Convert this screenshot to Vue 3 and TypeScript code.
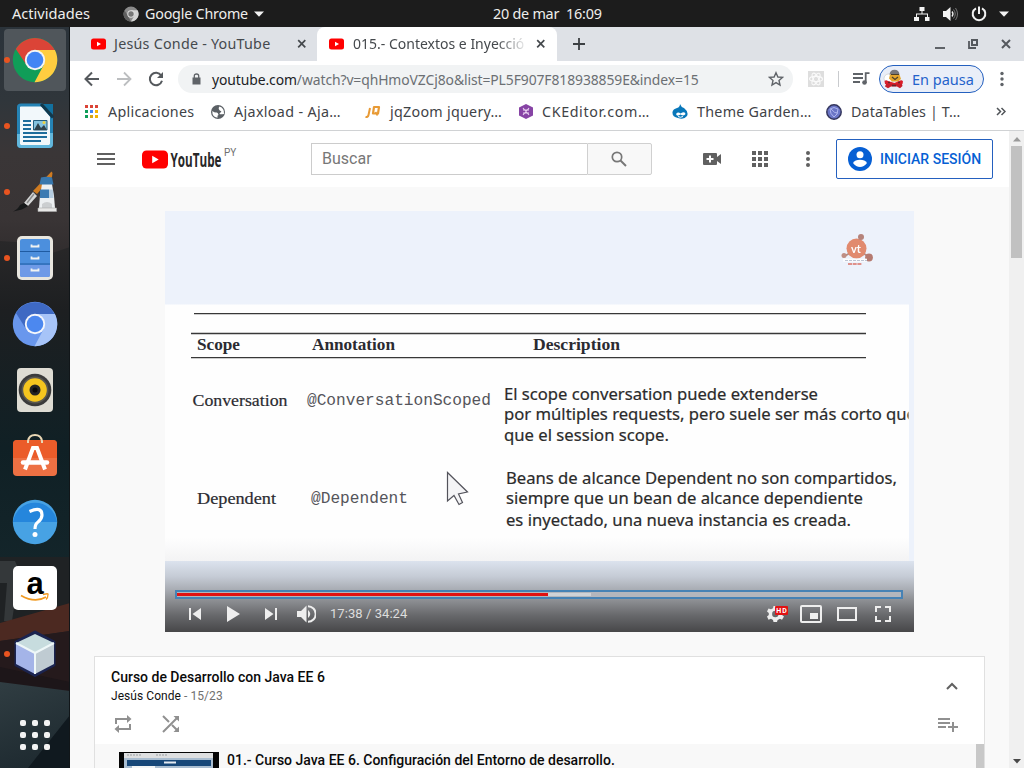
<script setup lang="ts">
interface Bookmark {
  kind: string
  label: string
  width: number
}

const bookmarks: Bookmark[] = [
  { kind: 'grid', label: 'Aplicaciones', width: 126 },
  { kind: 'globe', label: 'Ajaxload - Aja…', width: 154 },
  { kind: 'jq', label: 'jqZoom jquery…', width: 154 },
  { kind: 'ck', label: 'CKEditor.com…', width: 153 },
  { kind: 'drupal', label: 'Theme Garden…', width: 154 },
  { kind: 'dt', label: 'DataTables | T…', width: 150 },
]

const dock = [
  { id: 'chrome', running: true, active: true },
  { id: 'writer', running: true, active: false },
  { id: 'paint', running: true, active: false },
  { id: 'files', running: true, active: false },
  { id: 'chromium', running: false, active: false },
  { id: 'rhythm', running: false, active: false },
  { id: 'store', running: false, active: false },
  { id: 'help', running: false, active: false },
  { id: 'amazon', running: false, active: false },
  { id: 'netbeans', running: true, active: false },
]

const progress = { played: 51.3, buffered: 57.2 }
const nine = [0, 1, 2, 3, 4, 5, 6, 7, 8]
const appColors = ['#db4437', '#db4437', '#db4437', '#0f9d58', '#4285f4', '#f4b400', '#0f9d58', '#d9a514', '#f4b400']
</script>

<template>
  <div class="desktop">
    <header class="topbar">
      <span class="activities">Actividades</span>
      <svg class="tray-chrome" width="16" height="16" viewBox="0 0 16 16"><circle cx="8" cy="8" r="7.5" fill="#8b8b8b" /><path d="M8 4.3H14.6A7.5 7.5 0 0 1 8 15.5L11.3 9.8Z" fill="#d4d4d4" /><path d="M4.8 9.8 1.5 4.2A7.5 7.5 0 0 0 8 15.5Z" fill="#5f5f5f" /><circle cx="8" cy="8" r="3.7" fill="#ddd" /><circle cx="8" cy="8" r="2.7" fill="#777" /></svg>
      <span class="appname">Google Chrome</span>
      <svg class="tri" width="10" height="6"><path d="M0 0.5H10L5 5.8Z" fill="#f2f2f2" /></svg>
      <span class="clock">20 de mar&nbsp; 16:09</span>
      <div class="tray">
        <svg width="16" height="14" viewBox="0 0 16 14"><path d="M5.5 0h5v4h-2v2.5H14V10h1.500v4H11v-4h2V7.500H3V10h2v4H0v-4h2V6.500h5.500V4h-2z" fill="#f2f2f2" /></svg>
        <svg width="16" height="14" viewBox="0 0 16 14"><path d="M0 4h3L7.500 0v14L3 10H0z" fill="#f2f2f2" /><path d="M9 4.500q2 2.500 0 5" fill="none" stroke="#f2f2f2" stroke-width="1.300" /><path d="M10.500 2.500q3.500 4.500 0 9M12.500 1q4 6 0 12" fill="none" stroke="#777" stroke-width="1" /></svg>
        <svg width="16" height="16" viewBox="0 0 16 16"><path d="M5 2.300A6.300 6.300 0 1 0 11 2.300" fill="none" stroke="#f2f2f2" stroke-width="2" /><path d="M8 0.500V8" stroke="#f2f2f2" stroke-width="2" /></svg>
        <svg width="10" height="6"><path d="M0 0.500H10L5 5.800Z" fill="#f2f2f2" /></svg>
      </div>
    </header>

    <div class="workspace">
      <aside class="dock">
        <svg class="wall" width="70" height="741" viewBox="0 0 70 741">
          <defs>
            <linearGradient id="sky" x2="0" y2="1"><stop offset="0" stop-color="#2b333a" /><stop offset=".1" stop-color="#30363b" /><stop offset=".17" stop-color="#3a3637" /><stop offset=".26" stop-color="#393435" /><stop offset=".32" stop-color="#2f2b2c" /></linearGradient>
            <linearGradient id="hill" x2="0" y2="1"><stop offset="0" stop-color="#292829" /><stop offset=".2" stop-color="#1d1f21" /><stop offset=".6" stop-color="#102025" /><stop offset="1" stop-color="#14262b" /></linearGradient>
            <linearGradient id="floor" x2="0.300" y2="1"><stop offset="0" stop-color="#303d42" /><stop offset="1" stop-color="#1f2b31" /></linearGradient>
          </defs>
          <path d="M0 0H70V741H0Z" fill="url(#sky)" />
          <path d="M0 214 30 216 52 226 70 220V560H0Z" fill="url(#hill)" />
          <path d="M0 530H70V680H0Z" fill="#1f2224" />
          <path d="M0 534H15L18 541H54V546H20L17 560 12 594H4L7 556H0Z" fill="#34383a" />
          <path d="M0 596 70 576V604L0 614Z" fill="#4c2921" />
          <path d="M0 614 70 604V665L0 658Z" fill="#251a1c" />
          <path d="M0 640 70 655V664L0 657Z" fill="#1d1619" />
          <path d="M0 655 70 664V741H0Z" fill="url(#floor)" />
          <path d="M70 688 28 741H70Z" fill="#10191f" />
          <path d="M69.500 0V741" stroke="#111619" />
        </svg>
        <div v-for="d in dock" :key="d.id" class="dock-item" :class="{ active: d.active }">
          <i v-if="d.running" class="run-dot"></i>
          <svg v-if="d.id === 'chrome'" width="46" height="46" viewBox="0 0 46 46"><circle cx="23" cy="23" r="22.200" fill="#109d58" /><path d="M3.800 12A22.200 22.200 0 0 1 42.200 12L42.500 13H23L14.500 28Z" fill="#db4437" /><path d="M23 13H42.900A22.200 22.200 0 0 1 22.500 45.200L31.700 28Z" fill="#ffcd40" /><circle cx="23" cy="23" r="10.200" fill="#f4f4f4" /><circle cx="23" cy="23" r="8.300" fill="#4285f4" /></svg>
          <svg v-else-if="d.id === 'writer'" width="38" height="46" viewBox="0 0 38 46"><path d="M5 2H26L35.500 13V41Q35.500 43.500 33 43.500H5Q2.500 43.500 2.500 41V4Q2.500 2 5 2Z" fill="#f2f8fb" stroke="#2583b5" stroke-width="3" /><path d="M2.500 31V41Q2.500 43.500 5 43.500H33Q35.500 43.500 35.500 41V30" fill="none" stroke="#62b7dc" stroke-width="3" /><path d="M27 1H37V12Z" fill="#12719f" /><path d="M25 1 37 14.500" stroke="#12384b" stroke-width="3" /><path d="M7 18h8M7 22h8M7 26h8M7 30h24M7 34h24M7 38h18" stroke="#1d6d9c" stroke-width="1.800" /><path d="M17.500 17.500H31V27H17.500Z" fill="#85c3df" stroke="#255f7f" /><path d="M18 27 22 20 25 25 28 22 31 27Z" fill="#30434d" /><circle cx="28" cy="19.500" r="1.500" fill="#eed340" /></svg>
          <svg v-else-if="d.id === 'paint'" width="46" height="44" viewBox="0 0 46 44"><path d="M39.500 1.500 40.500 3 40 7 25 24 21 21Z" fill="#d07b20" /><path d="M21 22 25 26 16 36 12 33Z" fill="#d6d7d7" /><path d="M22 24 15 33" stroke="#8b8b8b" stroke-width="1.500" /><path d="M12 33 16 36Q11 40 1 41.500 6 39 8 35Z" fill="#17191a" /><path d="M30 14H40Q42.500 26 43 38H27Q27.500 25 30 14Z" fill="#eceff1" /><path d="M29 7.500Q34.500 6 40 7.500L41.500 14.500H27.500Z" fill="#3877ad" /><path d="M28 19.500H37V28H28Z" fill="#3d7bb2" /><path d="M37 19.500H41L41.500 28H37Z" fill="#b6cde0" /><path d="M30 38V34Q35 30 40 34V38Z" fill="#cbced0" /><path d="M26 38H44.500V41.500H26Z" fill="#e8e8e7" stroke="#aaa" stroke-width=".6" /></svg>
          <svg v-else-if="d.id === 'files'" width="38" height="46" viewBox="0 0 38 46"><rect x="1" y="1" width="36" height="44" rx="5" fill="#e8e6df" /><rect x="4" y="4" width="30" height="38" rx="2" fill="#4c8fdd" /><path d="M4 30H34V40Q34 42 32 42H6Q4 42 4 40Z" fill="#6f9ae7" /><path d="M4 16.500H34M4 29H34" stroke="#1f5ba2" /><path d="M15.500 9.500V11.500H22.500V9.500M15.500 21.500V23.500H22.500V21.500M15.500 33.500V35.500H22.500V33.500" fill="none" stroke="#f1f3f2" stroke-width="1.800" /></svg>
          <svg v-else-if="d.id === 'chromium'" width="46" height="46" viewBox="0 0 46 46"><circle cx="23" cy="23" r="22.200" fill="#6997ed" /><path d="M4 12A22.200 22.200 0 0 1 42.500 13H23L14 28Z" fill="#3e69c3" /><path d="M23 13H42.900A22.200 22.200 0 0 1 22.500 45.200L31.700 28Z" fill="#a7c4f8" /><circle cx="23" cy="23" r="10.200" fill="#f4f6fb" /><circle cx="23" cy="23" r="8.300" fill="#4c88ef" /></svg>
          <svg v-else-if="d.id === 'rhythm'" width="38" height="46" viewBox="0 0 38 46"><rect x="1" y="1" width="36" height="44" rx="4" fill="#dedcd3" /><circle cx="19" cy="23" r="16.300" fill="#3b3b3b" /><circle cx="19" cy="23" r="13.500" fill="#5a5850" /><circle cx="19" cy="23" r="11.800" fill="#f5c51e" /><circle cx="19" cy="23" r="5.500" fill="#242424" /><circle cx="19" cy="23" r="2.500" fill="#090909" /></svg>
          <svg v-else-if="d.id === 'store'" class="store" width="46" height="46" viewBox="0 0 46 46"><rect x="1" y="9" width="44" height="36" rx="4" fill="#ed7043" /><path d="M1 27V13Q1 9 5 9H41Q45 9 45 13V27Z" fill="#e95420" opacity=".7" /><path d="M16 12V10Q17 4 23 4 29 4 30 10V12" fill="none" stroke="#e9d7b5" stroke-width="2" /><path d="M13 38.500 21 17H25L33 38.500" fill="none" stroke="#fff" stroke-width="4" /><path d="M11 31.500H35" stroke="#fff" stroke-width="4.500" stroke-linecap="round" /></svg>
          <svg v-else-if="d.id === 'help'" width="46" height="46" viewBox="0 0 46 46"><circle cx="23" cy="23" r="22.200" fill="#47a2e4" /><path d="M1 23A22.200 22.200 0 0 1 45 23Z" fill="#2586dc" /><path d="M17.500 12.500Q30 7 30 16 30 20 26 23 23 25 23 30" fill="none" stroke="#fff" stroke-width="3.200" /><circle cx="23" cy="35.500" r="2.500" fill="#fff" /></svg>
          <svg v-else-if="d.id === 'amazon'" width="46" height="46" viewBox="0 0 46 46"><rect x="1" y="1" width="44" height="44" rx="5" fill="#fff" /><text x="23" y="28.500" text-anchor="middle" class="amazon-a">a</text><path d="M9 30.500Q23 38.500 34 32" fill="none" stroke="#f19a21" stroke-width="1.800" /><path d="M31 29.500Q37 28 36 29.500 36 33 34 34.500" fill="none" stroke="#f19a21" stroke-width="1.300" /></svg>
          <svg v-else width="46" height="48" viewBox="0 0 46 48"><path d="M23 2 42 12V35L23 45.500 4 35V12Z" fill="#1d2549" stroke="#1b2450" stroke-width="3" stroke-linejoin="round" /><path d="M23 4 42 13 23 23 4 13Z" fill="#c7dcde" /><path d="M4 13 23 23V44L4 34Z" fill="#a4b4e8" /><path d="M42 13 23 23V44L42 34Z" fill="#bfcbd2" /><path d="M4 13 23 23 42 13M23 23V44" fill="none" stroke="#eef7f8" stroke-width="2" /></svg>
        </div>
        <div class="show-apps"><i v-for="n in nine" :key="n"></i></div>
      </aside>

      <section class="browser">
        <div class="tabs">
          <div class="tab idle">
            <svg width="15" height="12" viewBox="0 0 15 12"><rect y=".5" width="15" height="11" rx="2.500" fill="#f00" /><path d="M6 3.700V8.300L10 6Z" fill="#fff" /></svg>
            <span class="tab-title first">Jesús Conde - YouTube</span>
            <svg class="close" width="10" height="10"><path d="M1.200 1.200 8.300 8.300M8.300 1.200 1.200 8.300" stroke="#45494d" stroke-width="1.700" /></svg>
          </div>
          <div class="tab current">
            <svg width="15" height="12" viewBox="0 0 15 12"><rect y=".5" width="15" height="11" rx="2.500" fill="#f00" /><path d="M6 3.700V8.300L10 6Z" fill="#fff" /></svg>
            <span class="tab-title second">015.- Contextos e Inyecció</span>
            <svg class="close" width="10" height="10"><path d="M1.200 1.200 8.300 8.300M8.300 1.200 1.200 8.300" stroke="#45494d" stroke-width="1.700" /></svg>
          </div>
          <svg class="newtab" width="12" height="12"><path d="M6 0V12M0 6H12" stroke="#3c4043" stroke-width="1.800" /></svg>
          <div class="winbtns">
            <svg width="10" height="12"><path d="M0 10H10" stroke="#5f6368" stroke-width="2" /></svg>
            <svg width="10" height="12"><path d="M4 2H9V7H4Z" fill="none" stroke="#55595e" stroke-width="2" /><path d="M1 3V10H8" fill="none" stroke="#55595e" stroke-width="1.800" /></svg>
            <svg width="10" height="12"><path d="M1 2 9 10M9 2 1 10" stroke="#55595e" stroke-width="2" /></svg>
          </div>
        </div>

        <div class="toolbar">
          <svg width="16" height="16" viewBox="0 0 16 16"><path d="M15 8H2M8 1.500 1.500 8 8 14.500" fill="none" stroke="#55595d" stroke-width="2" /></svg>
          <svg width="16" height="16" viewBox="0 0 16 16"><path d="M1 8H14M8 1.500 14.500 8 8 14.500" fill="none" stroke="#bcbec0" stroke-width="1.800" /></svg>
          <svg width="16" height="16" viewBox="0 0 16 16"><path d="M13.200 4.500A6.200 6.200 0 1 0 14 9.800" fill="none" stroke="#55595d" stroke-width="2" /><path d="M15 1V7H9Z" fill="#55595d" /></svg>
          <div class="omnibox">
            <svg class="lock" width="9" height="12"><path d="M.5 4.500H8.500V11.500H.5Z" fill="#5f6368" /><path d="M2.300 5V3Q2.300 1 4.500 1T6.700 3V5" fill="none" stroke="#5f6368" stroke-width="1.300" /></svg>
            <span class="url"><b>youtube.com</b>/watch?v=qhHmoVZCj8o&amp;list=PL5F907F818938859E&amp;index=15</span>
            <svg class="star" width="16" height="16" viewBox="0 0 16 16"><path d="M8 1.700 9.900 6 14.500 6.400 11 9.500 12 14 8 11.600 4 14 5 9.500 1.500 6.400 6.100 6Z" fill="none" stroke="#5f6368" stroke-width="1.400" /></svg>
          </div>
          <svg class="ext" width="16" height="16"><rect width="16" height="16" fill="#dedede" /><g fill="none" stroke="#fafafa" stroke-width="1.100"><ellipse cx="8" cy="8" rx="6.500" ry="2.600" /><ellipse cx="8" cy="8" rx="6.500" ry="2.600" transform="rotate(60 8 8)" /><ellipse cx="8" cy="8" rx="6.500" ry="2.600" transform="rotate(120 8 8)" /></g></svg>
          <i class="divider"></i>
          <svg class="queue" width="17" height="14"><path d="M0 2H10M0 6H10M0 10H7M12.700 11V1.200H16.500" fill="none" stroke="#5f6368" stroke-width="1.800" /><circle cx="11.500" cy="10.500" r="2.300" fill="#5f6368" /></svg>
          <div class="profile">
            <svg width="22" height="20" viewBox="0 0 22 20"><circle cx="5.500" cy="9.500" r="4.500" fill="#fff" stroke="#c5c5c5" stroke-width=".6" /><path d="M6.500 5.500Q7 .8 11.500 .8T16.500 5.500Z" fill="#77777a" /><path d="M7 5.500H16.500L18 10 15 12.500H9L6 9.500Z" fill="#e4a62c" /><path d="M8 5.500H16M9 8 12 10.500 15 8" stroke="#4c4029" stroke-width="1.200" fill="none" /><path d="M1.500 12Q3 10.500 5 12L11.500 14 16 12Q19 10.500 20 12.500L19.500 15H2Z" fill="#d91d2a" /><path d="M3 15H19L19.500 17 17 19.300 14 17.500H8L5 19.300 2 17.500Z" fill="#c81c28" /><path d="M5 13.500H7M15 13.500H17M9 16.500H13" stroke="#63262b" fill="none" stroke-width="1.300" /></svg>
            <span>En pausa</span>
          </div>
          <svg class="kebab" width="4" height="16"><circle cx="2" cy="2.500" r="1.700" /><circle cx="2" cy="8" r="1.700" /><circle cx="2" cy="13.500" r="1.700" /></svg>
        </div>

        <nav class="bookmarks">
          <div v-for="b in bookmarks" :key="b.kind" class="bookmark" :class="'bm-' + b.kind" :style="{ width: b.width + 'px' }">
            <svg v-if="b.kind === 'grid'" width="14" height="14"><rect v-for="n in nine" :key="n" :x="(n % 3) * 5" :y="Math.floor(n / 3) * 5" width="3" height="3" :fill="appColors[n]" /></svg>
            <svg v-else-if="b.kind === 'globe'" width="14" height="14" viewBox="0 0 14 14"><circle cx="7" cy="7" r="7" fill="#5b6065" /><path d="M1.300 6Q4 8 5.500 7.500T7.500 10Q6 10 6.500 12.700Q1 12 1.300 6ZM8.500 1.500Q7 3 8 4.500T10 6 9 8 13 9Q13.500 3 8.500 1.500Z" fill="#fff" /></svg>
            <svg v-else-if="b.kind === 'jq'" width="16" height="14" viewBox="0 0 16 14"><path d="M5 3 3.500 10Q3 12.500 .5 12" fill="none" stroke="#e89a35" stroke-width="2" /><path d="M9 2H14L13 8.500H8Z" fill="none" stroke="#e89a35" stroke-width="2.200" stroke-linejoin="round" /><path d="M10.500 7 12.500 10.500" stroke="#e89a35" stroke-width="1.600" /></svg>
            <svg v-else-if="b.kind === 'ck'" width="14" height="15" viewBox="0 0 14 15"><path d="M7 0 14 3.500V11.500L7 15 0 11.500V3.500Z" fill="#8744a5" /><path d="M4 4 10 11M10 4 4 11M4 6H10M4 9H10" stroke="#e9d1f0" stroke-width="1.100" /></svg>
            <svg v-else-if="b.kind === 'drupal'" width="16" height="15" viewBox="0 0 16 15"><path d="M8 0Q9 3 12 4 17 8 15 12 12 16 6 14 0 13 .5 8 1 5 5 4 8 3 8 0Z" fill="#0877ba" /><path d="M4 10Q6 7.500 8.500 9.500 13 7 13.500 10 12 12.500 8.500 10.500 5 13 4 10Z" fill="#fff" /><path d="M6 12.500Q8.500 14 11 12.500" stroke="#fff" fill="none" /></svg>
            <svg v-else width="16" height="16" viewBox="0 0 16 16"><circle cx="8" cy="8" r="7.200" fill="#6a75c6" stroke="#34365d" stroke-width="1.500" /><path d="M4 5Q8 2 12 5 12 11 8 13 4 10 4 5M5 5Q9 10 12 9" fill="none" stroke="#aeb5ee" /></svg>
            <span>{{ b.label }}</span>
          </div>
          <svg class="more" width="10" height="9"><path d="M1 1 4.500 4.500 1 8M5.500 1 9 4.500 5.500 8" fill="none" stroke="#505458" stroke-width="1.500" /></svg>
        </nav>

        <div class="page">
          <div class="content">
            <header class="yt-head">
              <svg class="burger" width="18" height="12"><path d="M0 1H18M0 6H18M0 11H18" stroke="#606060" stroke-width="2" /></svg>
              <svg class="logo" width="80" height="32"><rect x="0" y="7.500" width="26" height="18" rx="4.500" fill="#f00" /><path d="M10.200 12.800V20.200L16.700 16.500Z" fill="#fff" /><text x="28.500" y="23.500" textLength="51" lengthAdjust="spacingAndGlyphs" class="wordmark">YouTube</text></svg>
              <span class="country">PY</span>
              <div class="search"><span class="field">Buscar</span><span class="go"><svg width="16" height="16" viewBox="0 0 16 16"><circle cx="6" cy="6" r="4.700" fill="none" stroke="#777" stroke-width="1.700" /><path d="M9.500 9.500 15 15" stroke="#777" stroke-width="2" /></svg></span></div>
              <svg class="camera" width="18" height="12"><path d="M1 0H13Q14 0 14 1V4L18 1V11L14 8V11Q14 12 13 12H1Q0 12 0 11V1Q0 0 1 0Z" fill="#606060" /><path d="M7 2.500V9.500M3.500 6H10.500" stroke="#fff" stroke-width="2" /></svg>
              <svg class="apps" width="16" height="16"><rect v-for="n in nine" :key="n" :x="(n % 3) * 6" :y="Math.floor(n / 3) * 6" width="4" height="4" fill="#606060" /></svg>
              <svg class="dots" width="4" height="16"><circle cx="2" cy="2" r="2" /><circle cx="2" cy="8" r="2" /><circle cx="2" cy="14" r="2" /></svg>
              <div class="signin"><svg width="24" height="24"><circle cx="12" cy="12" r="12" fill="#065fd4" /><circle cx="12" cy="7.700" r="3.500" fill="#fff" /><path d="M5 16Q7 12.800 12 12.800T19 16Q16 20 12 20T5 16Z" fill="#fff" /></svg><span>INICIAR SESIÓN</span></div>
            </header>

            <div class="player">
              <svg class="slide" width="749" height="421" viewBox="0 0 749 421">
                <defs>
                  <linearGradient id="shade" x2="0" y2="1"><stop offset="0" stop-color="#dce3ee" /><stop offset=".22" stop-color="#c5cbd5" /><stop offset=".4" stop-color="#a9adb4" /><stop offset=".56" stop-color="#8c8e92" /><stop offset=".76" stop-color="#68696c" /><stop offset="1" stop-color="#474749" /></linearGradient>
                  <linearGradient id="paper" x2="0" y2="1"><stop offset=".91" stop-color="#fefefe" /><stop offset="1" stop-color="#f3f3f4" /></linearGradient>
                  <clipPath id="edge"><path d="M0 90H743.500V350H0Z" /></clipPath>
                </defs>
                <path d="M0 0H749V421H0Z" fill="#edf2fb" />
                <path d="M0 93.500H744V350H0Z" fill="url(#paper)" />
                <path d="M0 350H749V421H0Z" fill="url(#shade)" />
                <g opacity=".85"><path d="M678 46 685 42M692 38 695 28M692 38 704 46" stroke="#a9776b" stroke-width="1.800" /><circle cx="691.500" cy="37.500" r="10" fill="#df7856" /><circle cx="696" cy="26" r="3" fill="#ac7064" /><circle cx="704" cy="46.500" r="3.900" fill="#ac6658" /><circle cx="679" cy="44.500" r="2.500" fill="#b87e70" /><text x="686" y="41.500" class="vt">vt</text><path d="M678 49.200H702" stroke="#fff" stroke-width="3" /><path d="M680 49.500H702" stroke="#b5bccb" stroke-width="1" stroke-dasharray="3 1" /><path d="M683 53H697" stroke="#d85c4d" stroke-width="1.600" stroke-dasharray="4 .7" /></g>
                <path d="M29 102.700H701M26 122.500H701M26 146.700H701" stroke="#383838" stroke-width="1.300" />
                <g class="head"><text x="32" y="139" textLength="43" lengthAdjust="spacingAndGlyphs">Scope</text><text x="147" y="139" textLength="83" lengthAdjust="spacingAndGlyphs">Annotation</text><text x="368" y="139" textLength="87" lengthAdjust="spacingAndGlyphs">Description</text></g>
                <g class="scope"><text x="27.500" y="195" textLength="95" lengthAdjust="spacingAndGlyphs">Conversation</text><text x="32" y="292.500" textLength="79" lengthAdjust="spacingAndGlyphs">Dependent</text></g>
                <g class="code"><text x="142" y="194" textLength="184" lengthAdjust="spacingAndGlyphs">@ConversationScoped</text><text x="146" y="292" textLength="97" lengthAdjust="spacingAndGlyphs">@Dependent</text></g>
                <g class="desc" clip-path="url(#edge)">
                  <text x="339" y="188.500" textLength="314" lengthAdjust="spacingAndGlyphs">El scope conversation puede extenderse</text>
                  <text x="339" y="209" textLength="412" lengthAdjust="spacingAndGlyphs">por múltiples requests, pero suele ser más corto que</text>
                  <text x="339" y="230" textLength="165" lengthAdjust="spacingAndGlyphs">que el session scope.</text>
                  <text x="341" y="273" textLength="391" lengthAdjust="spacingAndGlyphs">Beans de alcance Dependent no son compartidos,</text>
                  <text x="341" y="293" textLength="357" lengthAdjust="spacingAndGlyphs">siempre que un bean de alcance dependiente</text>
                  <text x="341" y="315" textLength="345" lengthAdjust="spacingAndGlyphs">es inyectado, una nueva instancia es creada.</text>
                </g>
                <path d="M282.500 261.500V290L289 284.500 294 293.500 297.500 291.500 293.500 283 302.500 281Z" fill="#f4f4f6" stroke="#53535b" stroke-width="1.200" />
              </svg>
              <div class="seek"><i class="buffered" :style="{ width: progress.buffered + '%' }"></i><i class="played" :style="{ width: progress.played + '%' }"></i></div>
              <div class="controls">
                <svg width="12" height="12"><path d="M0 0H2V12H0ZM12 0V12L3.500 6Z" /></svg>
                <svg class="play" width="14" height="16"><path d="M0 0V16L13 8Z" /></svg>
                <svg class="next" width="12" height="12"><path d="M10 0H12V12H10ZM0 0V12L8.500 6Z" /></svg>
                <svg class="volume" width="19" height="18"><path d="M0 6H4L9.500 0.500V17.500L4 12H0Z" /><path d="M11 5Q15.500 9 11 13Z" /><path d="M11 1.300A7.700 7.700 0 0 1 11 16.700" fill="none" stroke="#eee" stroke-width="2" /></svg>
                <span class="time">17:38 / 34:24</span>
                <svg class="gear" width="22" height="18" viewBox="0 0 22 18"><path d="M6.500 1H10L10.600 3.300 13 4.300 15 3.400 17 6.500 15 8.300V10L17 11.500 15 14.700 13 13.800 10.600 15 10 17H6.500L6 15 4 13.800 1.500 14.700 0 11.500 1.800 10V8L0 6.500 1.500 3.400 4 4.300 6 3.300ZM8.300 5.800A3.200 3.200 0 1 0 8.300 12.200 3.200 3.200 0 1 0 8.300 5.800Z" fill-rule="evenodd" /><rect x="8" y="1" width="13" height="9" rx="1" fill="#e21212" /><text x="9.300" y="8" textLength="10.500" class="hd">HD</text></svg>
                <svg class="mini" width="22" height="18"><rect x="1" y="1" width="20" height="16" rx="1" fill="none" stroke="#eee" stroke-width="2" /><path d="M10 8H18V14H10Z" /></svg>
                <svg class="theater" width="20" height="14"><path d="M1 1H19V13H1Z" fill="none" stroke="#eee" stroke-width="2" /></svg>
                <svg class="full" width="16" height="16"><path d="M1 6V1H6M10 1H15V6M15 10V15H10M6 15H1V10" fill="none" stroke="#eee" stroke-width="2" /></svg>
              </div>
            </div>

            <div class="playlist">
              <div class="pl-head">
                <div class="pl-titles">
                  <div class="pl-title">Curso de Desarrollo con Java EE 6</div>
                  <div class="pl-sub"><span>Jesús Conde</span> - 15/23</div>
                </div>
                <svg class="chevron" width="12" height="8"><path d="M1 7 6 2 11 7" fill="none" stroke="#606060" stroke-width="2" /></svg>
              </div>
              <div class="pl-actions">
                <svg width="18" height="20"><path d="M2 10V5H14M16 10V15H4" fill="none" stroke="#909090" stroke-width="2" /><path d="M13 1 17.500 5 13 9ZM5 11 .5 15 5 19Z" fill="#909090" /></svg>
                <svg width="18" height="18"><path d="M1 1 7 7M1 17 15 3M10 10 15 15" fill="none" stroke="#909090" stroke-width="2" /><path d="M11.500 1H17V6.500ZM17 11.500V17H11.500Z" fill="#909090" /></svg>
                <svg class="add" width="20" height="15"><path d="M0 2H12M0 6H12M0 10H8M15 5V15M10 10H20" stroke="#909090" stroke-width="2" /></svg>
              </div>
              <div class="pl-list">
                <svg class="thumb" width="100" height="16"><path d="M0 0H100V16H0Z" fill="#050505" /><path d="M5 1H94V16H5Z" fill="#a9bdd0" /><path d="M5 1H94V6H5Z" fill="#dedfe0" /><path d="M8 3H22M37 3H49" stroke="#999da0" stroke-dasharray="2 1" /><path d="M8 8H92V14H8Z" fill="#174778" /><path d="M45 10.500H57" stroke="#e4eaf1" stroke-width="2" /><path d="M13 14H36V16H13Z" fill="#f3f5f5" /></svg>
                <span class="video-title">01.- Curso Java EE 6. Configuración del Entorno de desarrollo.</span>
                <i class="pl-scroll"></i>
              </div>
            </div>
          </div>
          <div class="scrollbar">
            <svg width="8" height="5"><path d="M4 0 8 4.500H0Z" fill="#9a9a9a" /></svg>
            <i class="thumb-bar"></i>
            <svg class="down" width="8" height="5"><path d="M0 0H8L4 4.500Z" fill="#484848" /></svg>
          </div>
        </div>
      </section>
    </div>
  </div>
</template>

<style>
html, body { margin: 0; overflow: hidden; }
</style>

<style scoped>
* { box-sizing: border-box; }
svg { display: block; flex: none; }
span { white-space: nowrap; }
.desktop { width: 1024px; height: 768px; overflow: hidden; display: flex; flex-direction: column; font-family: "Noto Sans", "Open Sans", sans-serif; background: #1c1c1c; }
.topbar { height: 27px; flex: none; display: flex; align-items: center; padding-left: 12px; color: #eeeeec; font-size: 14.6px; background: #1c1c1c; }
.topbar span { padding-bottom: 1px; }
.activities { width: 111px; }
.appname { width: 103px; margin-left: 6px; font-size: 14.3px; letter-spacing: -.2px; }
.tri { margin-left: 6px; }
.clock { width: 110px; margin-left: 229px; font-size: 14.4px; letter-spacing: -.25px; }
.tray { margin-left: auto; margin-right: 15px; display: flex; align-items: center; gap: 12px; }
.tray svg:first-child { margin-right: 1px; }
.workspace { display: flex; height: 741px; }
.dock { width: 70px; position: relative; flex: none; display: flex; flex-direction: column; align-items: center; padding-top: 2px; gap: 4px; }
.wall { position: absolute; left: 0; top: 0; }
.dock-item { width: 62px; height: 62px; position: relative; border-radius: 4px; display: flex; align-items: center; justify-content: center; }
.dock-item.active { background: #50565b; }
.run-dot { position: absolute; left: 0; top: 28px; width: 6px; height: 6px; border-radius: 50%; background: #e95420; }
.store { margin-bottom: 4px; }
.amazon-a { font: bold 31px "Liberation Sans", sans-serif; }
.show-apps { position: relative; width: 30px; margin-top: 31px; display: grid; grid-template-columns: repeat(3, 6px); gap: 6px; }
.show-apps i { width: 6px; height: 6px; border-radius: 2px; background: #f3f3f3; }
.browser { width: 954px; display: flex; flex-direction: column; background: #fff; }
.tabs { height: 34px; flex: none; display: flex; align-items: center; background: #dee1e6; color: #45494d; font-size: 14px; }
.tab { height: 34px; display: flex; align-items: center; }
.idle { width: 247px; padding-left: 21px; }
.current { width: 240px; padding-left: 12px; background: #fff; border-radius: 8px 8px 0 0; }
.tab-title { margin-left: 8px; padding-bottom: 1px; }
.first { width: 180px; font-size: 14.3px; letter-spacing: .24px; }
.second { width: 175px; margin-left: 9px; mask-image: linear-gradient(90deg, #000 82%, transparent); }
.close { margin-left: 3px; }
.current .close { margin-left: 8px; }
.newtab { margin-left: 16px; }
.winbtns { display: flex; margin-left: auto; margin-right: 13px; gap: 23px; }
.toolbar { height: 36px; flex: none; display: flex; align-items: center; padding-left: 14px; }
.toolbar > svg + svg { margin-left: 16px; }
.omnibox { width: 615px; height: 28px; margin-left: 14px; border-radius: 14px; background: #f1f3f4; display: flex; align-items: center; padding: 0 9px 0 14px; }
.url { margin-left: 11px; font-size: 13.9px; letter-spacing: -.09px; color: #6b6f73; }
.url b { font-weight: 400; color: #202124; }
.star { margin-left: auto; }
.ext { margin-left: 15px; }
.divider { width: 1px; height: 16px; margin-left: 14px; background: #c9cbce; }
.toolbar .queue { margin-left: 14px; }
.profile { width: 105px; height: 28px; margin-left: 9px; border: 1px solid #2460bf; border-radius: 14px; background: #e9eef8; display: flex; align-items: center; padding-left: 3px; color: #2463cb; font-size: 14.5px; }
.profile span { margin-left: 7px; padding-bottom: 1px; }
.toolbar .kebab { margin-left: 16px; fill: #5f6368; }
.bookmarks { height: 34px; flex: none; display: flex; align-items: center; padding: 0 0 4px 15px; border-bottom: 1px solid #d0d2d4; color: #3f4347; font-size: 14.3px; letter-spacing: .27px; }
.bookmark { display: flex; align-items: center; flex: none; }
.bookmark span { margin-left: 9px; }
.bm-ck { letter-spacing: .62px; }
.bm-dt { letter-spacing: .12px; }
.bm-globe { letter-spacing: .35px; }
.more { margin-left: auto; margin-right: 18px; }
.page { display: flex; height: 637px; background: #f9f9f9; font-family: Roboto, sans-serif; }
.content { width: 939px; overflow: hidden; }
.yt-head { height: 56px; display: flex; align-items: center; background: #fff; padding-left: 27px; }
.logo { margin-left: 27px; margin-top: -1px; }
.wordmark { font: 700 19px "Open Sans", Roboto, sans-serif; fill: #282828; }
.country { width: 14px; margin: 0 0 13px 2px; font-size: 10px; line-height: 12px; color: #707070; }
.search { margin-left: 73px; display: flex; width: 341px; height: 32px; }
.field { width: 276px; border: 1px solid #ccc; border-right: 0; padding-left: 10px; font-size: 16px; line-height: 30px; color: #777; }
.go { width: 65px; border: 1px solid #d0d0d0; background: #f8f8f8; border-radius: 0 2px 2px 0; display: flex; align-items: center; justify-content: center; padding-right: 2px; }
.camera { margin-left: 51px; }
.apps { margin-left: 31px; }
.dots { margin-left: 38px; fill: #606060; }
.signin { width: 157px; height: 40px; margin-left: 26px; border: 1px solid #2460bf; border-radius: 2px; color: #065fd4; display: flex; align-items: center; padding-left: 11px; font-size: 14px; font-weight: 500; }
.signin span { margin-left: 8px; }
.player { position: relative; width: 749px; height: 421px; margin: 24px 0 0 95px; }
.slide { position: absolute; left: 0; top: 0; }
.vt { font: bold 11px Lato, sans-serif; fill: #fff; }
.head { font: bold 16px "Liberation Serif", serif; fill: #2b2b31; }
.scope { font: 16px "Liberation Serif", serif; fill: #2b2b31; stroke: #2b2b31; stroke-width: .2px; }
.code { font: 16px "Liberation Mono", monospace; fill: #55555b; }
.desc { font: 16px "Noto Sans", sans-serif; fill: #2b2b2b; stroke: #2b2b2b; stroke-width: .2px; }
.seek { position: absolute; left: 10px; top: 379px; width: 728px; height: 9px; border: 2px solid #4682b5; background: #b3b6bd; }
.seek i { position: absolute; left: 0; top: 1px; height: 3px; }
.buffered { background: #d0d2d6; }
.played { background: #e21212; }
.controls { position: absolute; left: 24px; top: 390px; width: 702px; height: 26px; display: flex; align-items: center; fill: #eee; }
.play { margin-left: 26px; }
.next { margin-left: 24px; }
.volume { margin-left: 20px; }
.time { margin-left: 14px; margin-top: -1px; font-size: 13px; letter-spacing: .06px; color: #ddd; }
.gear { margin-left: auto; }
.hd { font: bold 7px Roboto, sans-serif; fill: #fff; }
.mini { margin-left: 11px; }
.theater { margin-left: 15px; }
.full { margin-left: 18px; }
.playlist { width: 891px; margin: 24px 0 0 24px; border: 1px solid #e0e0e0; background: #fff; }
.pl-head { display: flex; height: 53px; padding: 11px 26px 0 16px; }
.pl-title { font-size: 14px; font-weight: 500; line-height: 18px; color: #0a0a0a; white-space: nowrap; }
.pl-sub { margin-top: 1px; font-size: 12px; line-height: 18px; letter-spacing: .06px; color: #707070; white-space: nowrap; }
.pl-sub span { color: #111; }
.chevron { margin-left: auto; margin-top: 14px; }
.pl-actions { height: 34px; display: flex; align-items: center; padding: 0 26px 6px 19px; gap: 30px; }
.add { margin-left: auto; }
.pl-list { height: 60px; display: flex; background: #f8f8f8; padding-left: 24px; align-items: flex-start; }
.thumb { margin-top: 8px; }
.video-title { margin: 7px 0 0 8px; font-size: 14px; font-weight: 500; line-height: 18px; color: #0a0a0a; }
.pl-scroll { margin-left: auto; width: 8px; height: 60px; background: #c8c8c8; }
.scrollbar { width: 15px; background: #f0f0f0; display: flex; flex-direction: column; align-items: center; padding: 6px 0 4px; }
.thumb-bar { margin-top: 4px; width: 11px; height: 112px; background: #c1c1c1; }
.down { margin-top: auto; }
</style>
